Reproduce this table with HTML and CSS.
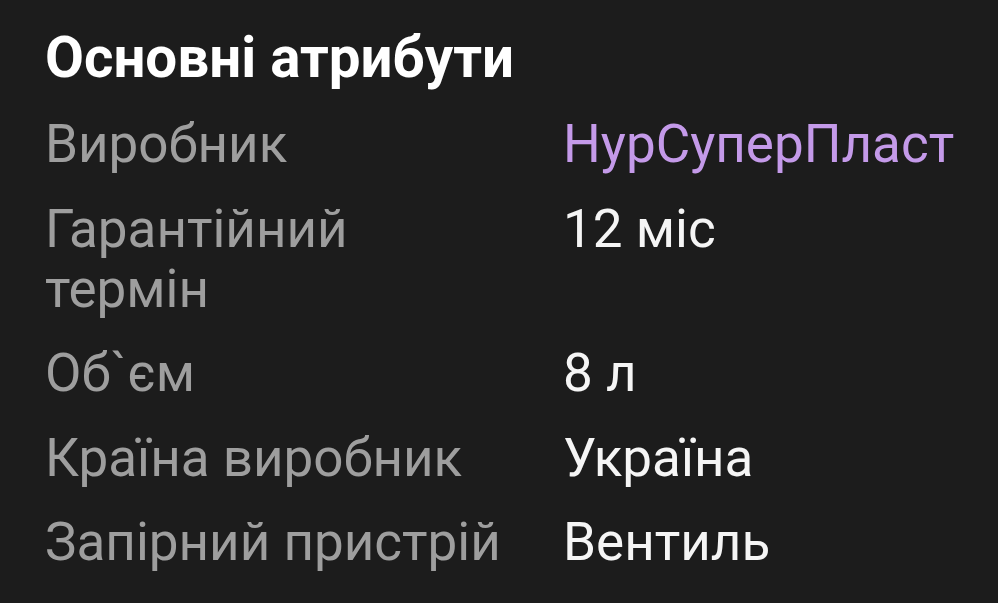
FILE: index.html
```html
<!DOCTYPE html>
<html lang="uk">
<head>
<meta charset="utf-8">
<link rel="stylesheet" href="styles.css">
</head>
<body>
<section class="card">
  <h2 class="title">Основні атрибути</h2>
  <dl class="attrs">
    <dt>Виробник</dt><dd class="link">НурСуперПласт</dd>
    <dt>Гарантійний термін</dt><dd>12 міс</dd>
    <dt>Об`єм</dt><dd>8 л</dd>
    <dt>Країна виробник</dt><dd>Україна</dd>
    <dt>Запірний пристрій</dt><dd>Вентиль</dd>
  </dl>
</section>
</body>
</html>
```
FILE: styles.css
```css
html, body {
  margin: 0;
  padding: 0;
  background: #1c1c1c;
}
body {
  font-family: Roboto, "Noto Sans", sans-serif;
  width: 998px;
  height: 603px;
  overflow: hidden;
}
.card {
  padding: 28px 45px 0 45px;
}
.title {
  margin: 0;
  font-size: 56.5px;
  line-height: 60px;
  font-weight: 700;
  color: #ffffff;
}
.attrs {
  margin: 26px 0 0 0;
  display: grid;
  grid-template-columns: 462px 1fr;
  column-gap: 56px;
  row-gap: 24.5px;
  font-size: 53px;
  line-height: 60px;
}
.attrs dt {
  color: #9e9e9e;
}
.attrs dd {
  margin: 0;
  color: #f5f5f5;
}
.attrs dd.link {
  color: #c49ae9;
}
```
